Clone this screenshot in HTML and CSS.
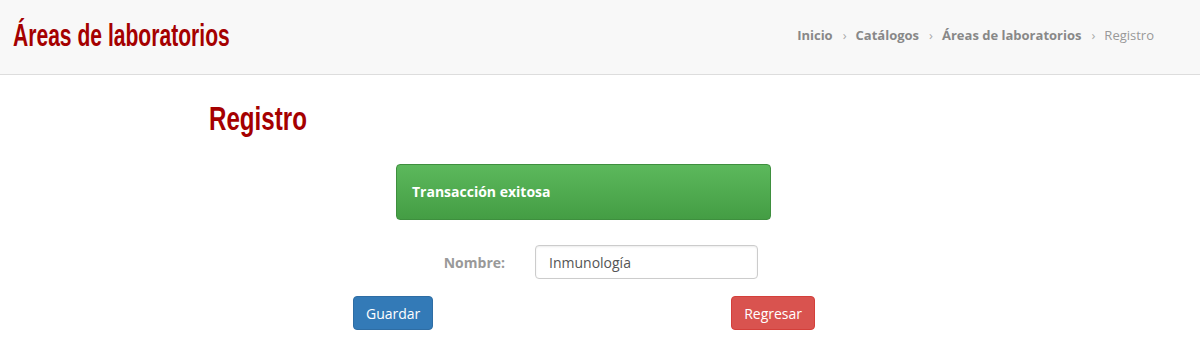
FILE: index.html
```html
<!DOCTYPE html>
<html lang="es">
<head>
  <meta charset="UTF-8">
  <title>Áreas de laboratorios</title>
  <link rel="stylesheet" href="styles.css">
</head>
<body>
  <div class="header">
    <h1 class="page-title">Áreas de laboratorios</h1>
    <ul class="breadcrumb">
      <li><a href="#">Inicio</a></li>
      <li><a href="#">Catálogos</a></li>
      <li><a href="#">Áreas de laboratorios</a></li>
      <li class="active">Registro</li>
    </ul>
  </div>
  <div class="content">
    <h2 class="section-title">Registro</h2>
    <form class="form-box">
      <div class="alert-success">Transacción exitosa</div>
      <div class="form-row">
        <label class="form-label" for="nombre">Nombre:</label>
        <input class="form-input" id="nombre" type="text" value="Inmunología">
      </div>
      <div class="form-actions">
        <button type="button" class="btn btn-primary">Guardar</button>
        <button type="button" class="btn btn-danger">Regresar</button>
      </div>
    </form>
  </div>
</body>
</html>
```

FILE: styles.css
```css
body {
  margin: 0;
  font-family: "Open Sans", "Liberation Sans", sans-serif;
  background-color: #ffffff;
  color: #555555;
}
.header {
  height: 74px;
  background-color: #f8f8f8;
  border-bottom: 1px solid #dddddd;
  display: flex;
  align-items: center;
  justify-content: space-between;
  padding: 0 46px 0 13px;
}
/* titulos estilo Oswald: fuente estrecha simulada */
.page-title {
  margin: 0 0 3px 0;
  font-family: "Liberation Sans", sans-serif;
  font-weight: bold;
  font-size: 31px;
  line-height: 34px;
  color: #a50000;
  transform: scaleX(0.68);
  transform-origin: left center;
  white-space: nowrap;
}
.breadcrumb {
  list-style: none;
  margin: 0 0 4px 0;
  padding: 0;
  display: flex;
  font-size: 13px;
}
.breadcrumb li + li:before {
  content: "›";
  padding: 0 9px 0 10px;
  color: #aaaaaa;
  font-weight: normal;
}
.breadcrumb a {
  color: #888888;
  font-weight: bold;
  text-decoration: none;
}
.breadcrumb .active {
  color: #999999;
}
.content {
  padding: 0 0 0 209px;
}
.section-title {
  margin: 23px 0 26px 0;
  font-family: "Liberation Sans", sans-serif;
  font-weight: bold;
  font-size: 34px;
  line-height: 40px;
  color: #a50000;
  transform: scaleX(0.71);
  transform-origin: left center;
}
.form-box {
  width: 462px;
  margin-left: 144px;
}
.alert-success {
  width: 343px;
  margin-left: 43px;
  padding: 18px 15px;
  border: 1px solid #3e8f3e;
  border-radius: 4px;
  background-image: linear-gradient(to bottom, #5cb85c 0%, #449d44 100%);
  color: #ffffff;
  font-weight: bold;
  font-size: 14px;
  line-height: 18px;
}
.form-row {
  display: flex;
  align-items: center;
  margin-top: 25px;
}
.form-label {
  width: 152px;
  text-align: right;
  font-weight: bold;
  font-size: 14px;
  color: #999999;
}
.form-input {
  margin-left: 30px;
  width: 223px;
  height: 34px;
  box-sizing: border-box;
  padding: 6px 13px;
  border: 1px solid #cccccc;
  border-radius: 4px;
  box-shadow: inset 0 1px 2px rgba(0,0,0,0.075);
  font-family: "Open Sans", "Liberation Sans", sans-serif;
  font-size: 14px;
  color: #555555;
}
.form-actions {
  display: flex;
  justify-content: space-between;
  margin-top: 17px;
}
.btn {
  height: 34px;
  padding: 6px 12px;
  border-radius: 4px;
  border: 1px solid transparent;
  font-family: "Open Sans", "Liberation Sans", sans-serif;
  font-size: 14px;
  color: #ffffff;
}
.btn-primary {
  background-color: #337ab7;
  border-color: #2e6da4;
}
.btn-danger {
  background-color: #d9534f;
  border-color: #d43f3a;
}
```
